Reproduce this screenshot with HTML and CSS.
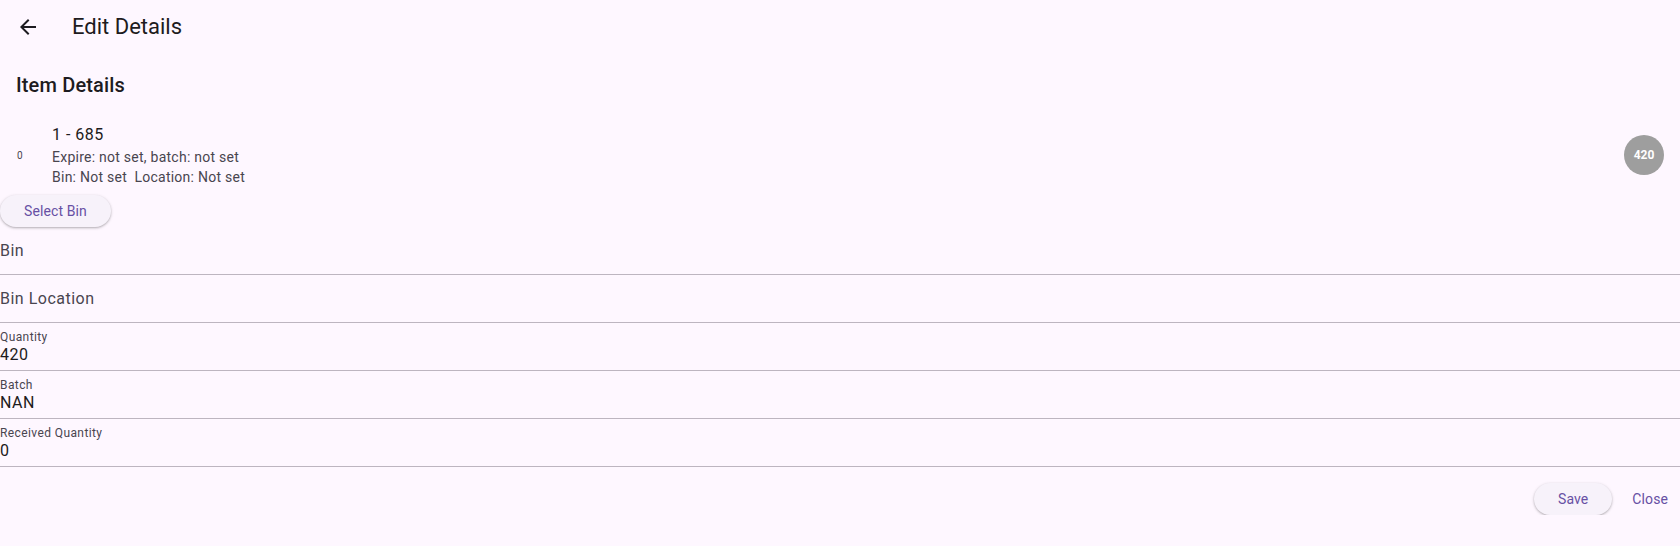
FILE: index.html
```html
<!DOCTYPE html>
<html lang="en">
<head>
<meta charset="utf-8">
<title>Edit Details</title>
<link rel="stylesheet" href="styles.css">
</head>
<body>
<header class="appbar">
  <button class="icon-btn" aria-label="Back">
    <svg width="24" height="24" viewBox="0 0 24 24"><path d="M20 11H7.83l5.59-5.59L12 4l-8 8 8 8 1.41-1.41L7.83 13H20v-2z" fill="#1d1b20"/></svg>
  </button>
  <h1 class="appbar-title">Edit Details</h1>
</header>

<main class="content">
  <h2 class="section-title">Item Details</h2>

  <div class="tile">
    <div class="tile-leading">0</div>
    <div class="tile-body">
      <div class="tile-title">1 - 685</div>
      <div class="tile-sub">Expire: not set, batch: not set</div>
      <div class="tile-sub">Bin: Not set  Location: Not set</div>
    </div>
    <div class="avatar">420</div>
  </div>

  <button class="btn-elevated">Select Bin</button>

  <div class="field field-empty"><span class="hint">Bin</span></div>
  <div class="field field-empty"><span class="hint">Bin Location</span></div>
  <div class="field"><span class="label">Quantity</span><span class="value">420</span></div>
  <div class="field"><span class="label">Batch</span><span class="value">NAN</span></div>
  <div class="field"><span class="label">Received Quantity</span><span class="value">0</span></div>

  <div class="actions">
    <button class="btn-elevated btn-save">Save</button>
    <button class="btn-text">Close</button>
  </div>
</main>
</body>
</html>
```

FILE: styles.css
```css
* { box-sizing: border-box; }

html, body {
  margin: 0;
  padding: 0;
  background: #fef7ff;
  font-family: Roboto, "Noto Sans", sans-serif;
  color: #1d1b20;
}

button {
  font-family: inherit;
  border: none;
  cursor: pointer;
}

.appbar {
  height: 52px;
  display: flex;
  align-items: center;
  padding-left: 4px;
  padding-top: 1px;
}

.icon-btn {
  width: 48px;
  height: 48px;
  display: flex;
  align-items: center;
  justify-content: center;
  background: transparent;
  padding: 0;
}

.icon-btn svg { display: block; }

.appbar-title {
  margin: 0 0 0 20px;
  font-size: 22px;
  font-weight: 400;
  line-height: 28px;
  color: #1d1b20;
}

.section-title {
  margin: 19px 0 0 16px;
  font-size: 20px;
  font-weight: 500;
  line-height: 28px;
  letter-spacing: 0.15px;
  color: #1d1b20;
}

.tile {
  margin-top: 15px;
  height: 81px;
  display: flex;
  align-items: center;
  padding: 0 16px;
}

.tile-leading {
  width: 20px;
  margin-right: 16px;
  margin-top: 2px;
  font-size: 10px;
  line-height: 14px;
  color: #49454f;
  padding-left: 1px;
}

.tile-body {
  flex: 1;
  display: flex;
  flex-direction: column;
}

.tile-title {
  font-size: 16px;
  line-height: 24px;
  letter-spacing: 0.5px;
  color: #1d1b20;
}

.tile-sub {
  font-size: 14px;
  line-height: 20px;
  letter-spacing: 0.25px;
  color: #49454f;
  white-space: pre;
}

.avatar {
  width: 40px;
  height: 40px;
  border-radius: 50%;
  background: #9e9e9e;
  color: #ffffff;
  font-size: 12px;
  font-weight: 700;
  display: flex;
  align-items: center;
  justify-content: center;
  margin-top: 1px;
}

.btn-elevated {
  display: inline-flex;
  align-items: center;
  justify-content: center;
  height: 32px;
  padding: 0 24px;
  border-radius: 16px;
  background: #f7f2fa;
  color: #6750a4;
  font-size: 14px;
  font-weight: 400;
  letter-spacing: 0.1px;
  box-shadow: 0 1px 2px rgba(0, 0, 0, 0.22), 0 1px 3px 1px rgba(0, 0, 0, 0.07);
}

.field {
  height: 48px;
  border-bottom: 1px solid #bdb5c0;
  display: flex;
  flex-direction: column;
  padding-top: 6px;
}

.field-empty {
  padding-top: 12px;
}

.hint {
  font-size: 16px;
  line-height: 24px;
  letter-spacing: 0.5px;
  color: #49454f;
}

.label {
  font-size: 12px;
  line-height: 16px;
  letter-spacing: 0.4px;
  color: #49454f;
}

.value {
  font-size: 16px;
  line-height: 19px;
  letter-spacing: 0.5px;
  color: #1d1b20;
}

.actions {
  margin-top: 16px;
  display: flex;
  justify-content: flex-end;
  gap: 8px;
}

.btn-text {
  height: 32px;
  padding: 0 12px;
  background: transparent;
  color: #6750a4;
  font-size: 14px;
  font-weight: 400;
  letter-spacing: 0.1px;
}
```
